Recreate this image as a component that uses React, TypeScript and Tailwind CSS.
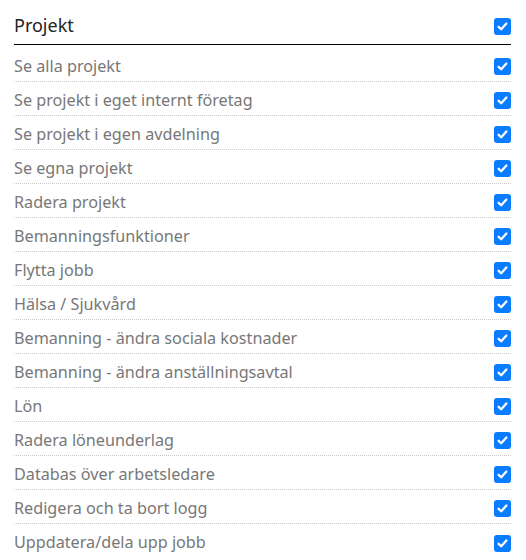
const items = [
  "Se alla projekt",
  "Se projekt i eget internt företag",
  "Se projekt i egen avdelning",
  "Se egna projekt",
  "Radera projekt",
  "Bemanningsfunktioner",
  "Flytta jobb",
  "Hälsa / Sjukvård",
  "Bemanning - ändra sociala kostnader",
  "Bemanning - ändra anställningsavtal",
  "Lön",
  "Radera löneunderlag",
  "Databas över arbetsledare",
  "Redigera och ta bort logg",
  "Uppdatera/dela upp jobb",
];

function Check() {
  return (
    <span className="flex h-[17px] w-[17px] shrink-0 items-center justify-center rounded-[3px] bg-[#0a7cff]">
      <svg viewBox="0 0 16 16" className="h-[13px] w-[13px]">
        <path d="M3.2 8.4 6.4 11.4 12.8 4.4" fill="none" stroke="white" strokeWidth="2.8" strokeLinecap="round" strokeLinejoin="round" />
      </svg>
    </span>
  );
}

export default function App() {
  return (
    <div className="w-[526px] bg-white pl-[14px] pr-[15px] font-['Noto_Sans',sans-serif]">
      <div className="mb-[3px] box-border flex h-[45px] items-center justify-between border-b border-black pt-[9px]">
        <span className="pb-[2px] text-[18px] text-[#222]">Projekt</span>
        <Check />
      </div>
      {items.map((label, i) => (
        <div
          key={label}
          className={
            "box-border flex h-[34px] items-center justify-between pt-[4px] " +
            (i < items.length - 1 ? "border-b border-dotted border-[#c8c8c8]" : "")
          }
        >
          <span className="pb-[1px] text-[16.2px] text-[#777]">{label}</span>
          <Check />
        </div>
      ))}
    </div>
  );
}
